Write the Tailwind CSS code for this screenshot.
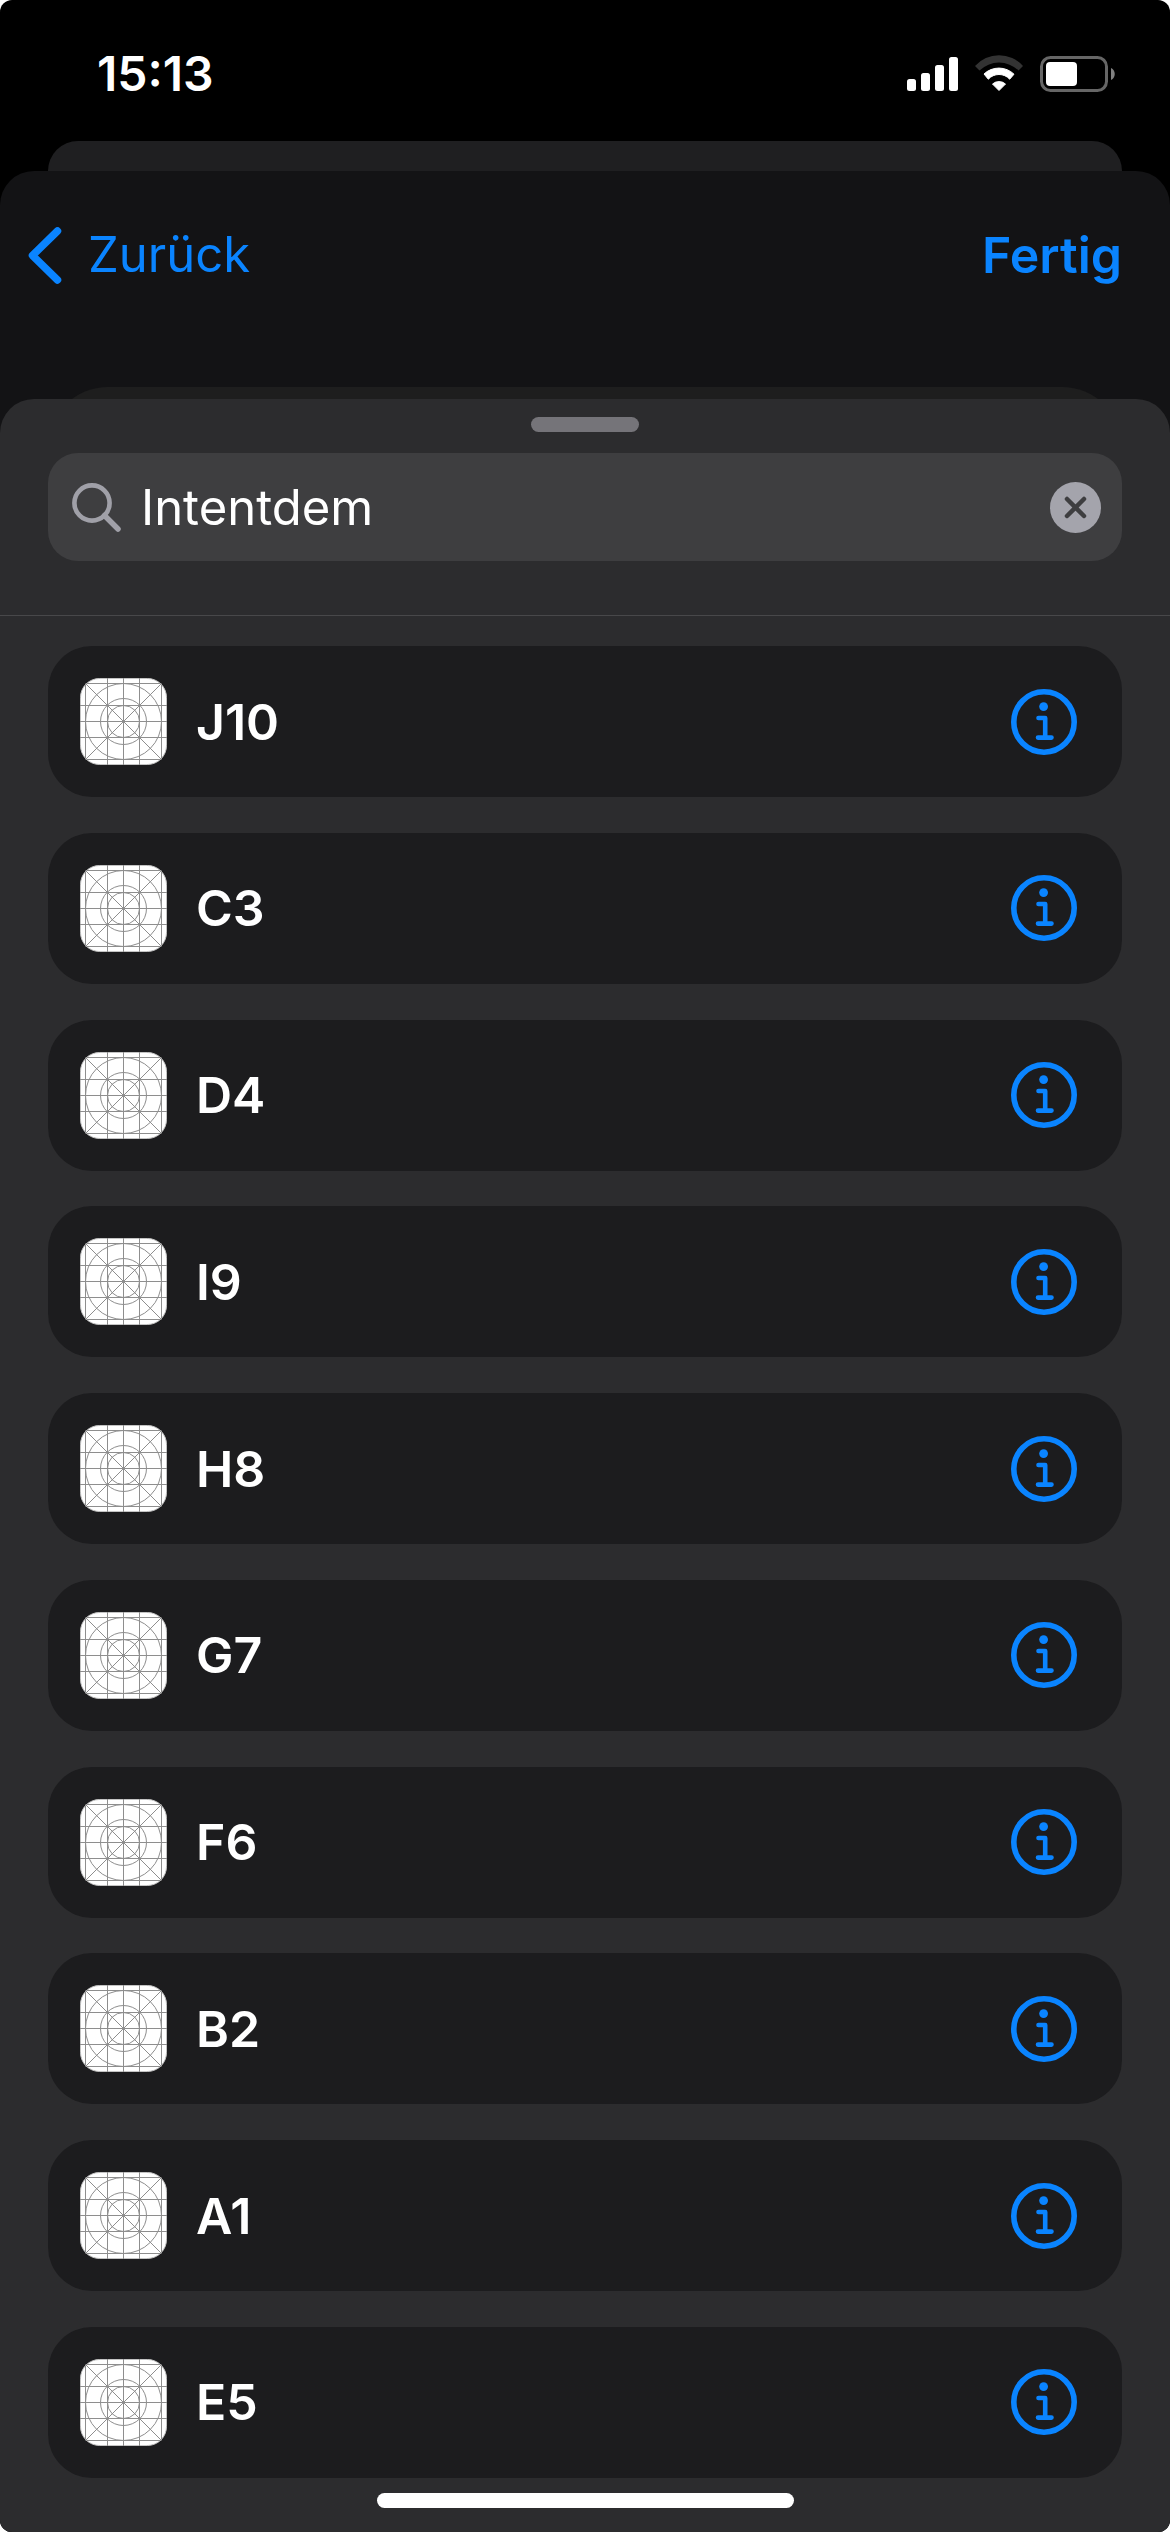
<!DOCTYPE html>
<html lang="de">
<head>
<meta charset="utf-8">
<meta name="viewport" content="width=device-width, initial-scale=1">
<title>Intentdem</title>
<script src="https://cdn.jsdelivr.net/npm/@tailwindcss/browser@4"></script>
</head>
<body class="bg-white font-['Inter',sans-serif] text-white">
<!-- Shared icons -->
<svg class="hidden" aria-hidden="true">
  <symbol id="app" viewBox="0 0 87 87">
    <rect x=".5" y=".5" width="86" height="86" rx="19" fill="#fff" stroke="#c4c4c4"/>
    <g fill="none" stroke="#8e8e8e">
      <path d="M5.5 7v73M27.5 0v87M43.5 0v87M59.5 0v87M81.5 7v73M7 5.5h73M0 27.5h87M0 43.5h87M0 59.5h87M7 81.5h73M5.5 5.5l76 76M81.5 5.5l-76 76"/>
      <circle cx="43.5" cy="43.5" r="38"/>
      <circle cx="43.5" cy="43.5" r="23"/>
      <circle cx="43.5" cy="43.5" r="16"/>
    </g>
    <circle cx="43.5" cy="43.5" r="1.5" fill="#8e8e8e"/>
  </symbol>
  <symbol id="info" viewBox="0 0 66 66">
    <circle cx="33" cy="33" r="30.2" fill="none" stroke="currentColor" stroke-width="5.6"/>
    <circle cx="32.6" cy="17.6" r="4.4" fill="currentColor"/>
    <path d="M27.5 29h6.7v19.3M27 48.6h13.5" fill="none" stroke="currentColor" stroke-width="4.6" stroke-linecap="round" stroke-linejoin="round"/>
  </symbol>
</svg>

<div class="flex min-h-screen flex-col overflow-hidden rounded-[12px] bg-black">
  <header class="flex h-[141px] items-center justify-between pt-[6px] pr-[55px] pl-[97px]">
    <time class="text-[48px] leading-[54px] font-semibold">15:13</time>
    <svg class="h-[37px] w-[208px]" viewBox="0 0 208 37" role="img" aria-label="Signal, WLAN, Akku">
      <g fill="#fff">
        <rect x="0" y="24" width="9" height="12" rx="2.5"/>
        <rect x="14" y="18" width="9" height="18" rx="2.5"/>
        <rect x="28" y="10" width="9" height="26" rx="2.5"/>
        <rect x="42" y="2" width="9" height="34" rx="2.5"/>
      </g>
      <path d="M68 11A32 32 0 0 1 116 11L111.500 15.500A28 28 0 0 0 72.500 15.500Z" fill="#333"/>
      <path d="M77 19A21.700 21.700 0 0 1 107 19.200L102.700 24.200A14.500 14.500 0 0 0 81.300 24.200Z" fill="#fff" stroke="#fff" stroke-linejoin="round"/>
      <path d="M85.500 29A10 10 0 0 1 98.500 29L92 35.500Z" fill="#fff" stroke="#fff" stroke-linejoin="round"/>
      <rect x="134.500" y="2.500" width="65" height="33" rx="9" fill="none" stroke="#666" stroke-width="3"/>
      <rect x="139" y="7" width="31" height="24" rx="4" fill="#fff"/>
      <path d="M204 13c5 2 5 10 0 12z" fill="#808080"/>
    </svg>
  </header>

  <div class="mx-12 h-[30px] rounded-t-[30px] bg-[#1f1f21]"></div>

  <div class="flex flex-1 flex-col rounded-t-[34px] bg-[#131315]">
    <nav class="flex h-[216px] items-start justify-between pt-[54px] pr-[48px] pl-[28px] leading-[60px] text-[#0a84ff]">
      <a href="#" class="flex items-center gap-[26px] text-[49px]">
        <svg class="h-[57px] w-[34px]" viewBox="0 0 34 57" fill="none" stroke="currentColor" stroke-width="7.500" stroke-linecap="round" stroke-linejoin="round" aria-hidden="true"><path d="M29.500 4L4.500 28.500L29.500 53"/></svg>
        Zurück
      </a>
      <button type="button" class="text-[50px] font-semibold">Fertig</button>
    </nav>
    <div class="mx-12 -mb-12 h-[60px] rounded-t-[60px] bg-[#1e1e1e]"></div>

    <main class="relative flex flex-1 flex-col rounded-t-[34px] bg-[#2c2c2e] pt-[18px]">
      <div class="mx-auto h-[15px] w-[108px] rounded-full bg-[#757479]"></div>

      <form class="mx-12 mt-[21px] flex h-[108px] items-center rounded-[30px] bg-[#3e3e40] pr-[21px] pl-[24px]">
        <svg class="h-[49px] w-[49px] shrink-0 text-[#a0a0a8]" viewBox="0 0 49 49" fill="none" stroke="currentColor" stroke-width="4.600" aria-hidden="true"><circle cx="20" cy="20" r="17.600"/><path d="M32.500 32.500L46 46" stroke-width="5.500" stroke-linecap="round"/></svg>
        <input type="text" value="Intentdem" aria-label="Suchen" class="min-w-0 flex-1 bg-transparent pt-[2px] pl-[20px] text-[49px] leading-[60px] outline-none">
        <button type="button" aria-label="Text löschen" class="shrink-0">
          <svg class="h-[51px] w-[51px]" viewBox="0 0 51 51" aria-hidden="true"><circle cx="25.500" cy="25.500" r="25.500" fill="#a4a4ac"/><path d="M17 17l17 17M34 17l-17 17" stroke="#3e3e40" stroke-width="4.500" stroke-linecap="round"/></svg>
        </button>
      </form>

      <ul class="mt-[54px] flex flex-1 flex-col justify-between gap-6 border-t border-[#48484a] px-12 pt-[30px] text-[50px] leading-[60px] font-semibold">
        <li class="flex h-[151px] items-center rounded-[44px] bg-[#1c1c1e] pr-[45px] pl-[32px]">
          <svg class="h-[87px] w-[87px]" aria-hidden="true"><use href="#app"/></svg>
          <span class="flex-1 pl-[29px]">J10</span>
          <button type="button" aria-label="Info zu J10" class="text-[#0a84ff]"><svg class="h-[66px] w-[66px]" aria-hidden="true"><use href="#info"/></svg></button>
        </li>
        <li class="flex h-[151px] items-center rounded-[44px] bg-[#1c1c1e] pr-[45px] pl-[32px]">
          <svg class="h-[87px] w-[87px]" aria-hidden="true"><use href="#app"/></svg>
          <span class="flex-1 pl-[29px]">C3</span>
          <button type="button" aria-label="Info zu C3" class="text-[#0a84ff]"><svg class="h-[66px] w-[66px]" aria-hidden="true"><use href="#info"/></svg></button>
        </li>
        <li class="flex h-[151px] items-center rounded-[44px] bg-[#1c1c1e] pr-[45px] pl-[32px]">
          <svg class="h-[87px] w-[87px]" aria-hidden="true"><use href="#app"/></svg>
          <span class="flex-1 pl-[29px]">D4</span>
          <button type="button" aria-label="Info zu D4" class="text-[#0a84ff]"><svg class="h-[66px] w-[66px]" aria-hidden="true"><use href="#info"/></svg></button>
        </li>
        <li class="flex h-[151px] items-center rounded-[44px] bg-[#1c1c1e] pr-[45px] pl-[32px]">
          <svg class="h-[87px] w-[87px]" aria-hidden="true"><use href="#app"/></svg>
          <span class="flex-1 pl-[29px]">I9</span>
          <button type="button" aria-label="Info zu I9" class="text-[#0a84ff]"><svg class="h-[66px] w-[66px]" aria-hidden="true"><use href="#info"/></svg></button>
        </li>
        <li class="flex h-[151px] items-center rounded-[44px] bg-[#1c1c1e] pr-[45px] pl-[32px]">
          <svg class="h-[87px] w-[87px]" aria-hidden="true"><use href="#app"/></svg>
          <span class="flex-1 pl-[29px]">H8</span>
          <button type="button" aria-label="Info zu H8" class="text-[#0a84ff]"><svg class="h-[66px] w-[66px]" aria-hidden="true"><use href="#info"/></svg></button>
        </li>
        <li class="flex h-[151px] items-center rounded-[44px] bg-[#1c1c1e] pr-[45px] pl-[32px]">
          <svg class="h-[87px] w-[87px]" aria-hidden="true"><use href="#app"/></svg>
          <span class="flex-1 pl-[29px]">G7</span>
          <button type="button" aria-label="Info zu G7" class="text-[#0a84ff]"><svg class="h-[66px] w-[66px]" aria-hidden="true"><use href="#info"/></svg></button>
        </li>
        <li class="flex h-[151px] items-center rounded-[44px] bg-[#1c1c1e] pr-[45px] pl-[32px]">
          <svg class="h-[87px] w-[87px]" aria-hidden="true"><use href="#app"/></svg>
          <span class="flex-1 pl-[29px]">F6</span>
          <button type="button" aria-label="Info zu F6" class="text-[#0a84ff]"><svg class="h-[66px] w-[66px]" aria-hidden="true"><use href="#info"/></svg></button>
        </li>
        <li class="flex h-[151px] items-center rounded-[44px] bg-[#1c1c1e] pr-[45px] pl-[32px]">
          <svg class="h-[87px] w-[87px]" aria-hidden="true"><use href="#app"/></svg>
          <span class="flex-1 pl-[29px]">B2</span>
          <button type="button" aria-label="Info zu B2" class="text-[#0a84ff]"><svg class="h-[66px] w-[66px]" aria-hidden="true"><use href="#info"/></svg></button>
        </li>
        <li class="flex h-[151px] items-center rounded-[44px] bg-[#1c1c1e] pr-[45px] pl-[32px]">
          <svg class="h-[87px] w-[87px]" aria-hidden="true"><use href="#app"/></svg>
          <span class="flex-1 pl-[29px]">A1</span>
          <button type="button" aria-label="Info zu A1" class="text-[#0a84ff]"><svg class="h-[66px] w-[66px]" aria-hidden="true"><use href="#info"/></svg></button>
        </li>
        <li class="flex h-[151px] items-center rounded-[44px] bg-[#1c1c1e] pr-[45px] pl-[32px]">
          <svg class="h-[87px] w-[87px]" aria-hidden="true"><use href="#app"/></svg>
          <span class="flex-1 pl-[29px]">E5</span>
          <button type="button" aria-label="Info zu E5" class="text-[#0a84ff]"><svg class="h-[66px] w-[66px]" aria-hidden="true"><use href="#info"/></svg></button>
        </li>
      </ul>

      <div class="mx-auto mt-[15px] mb-6 h-[15px] w-[417px] rounded-full bg-white"></div>
    </main>
  </div>
</div>
</body>
</html>
